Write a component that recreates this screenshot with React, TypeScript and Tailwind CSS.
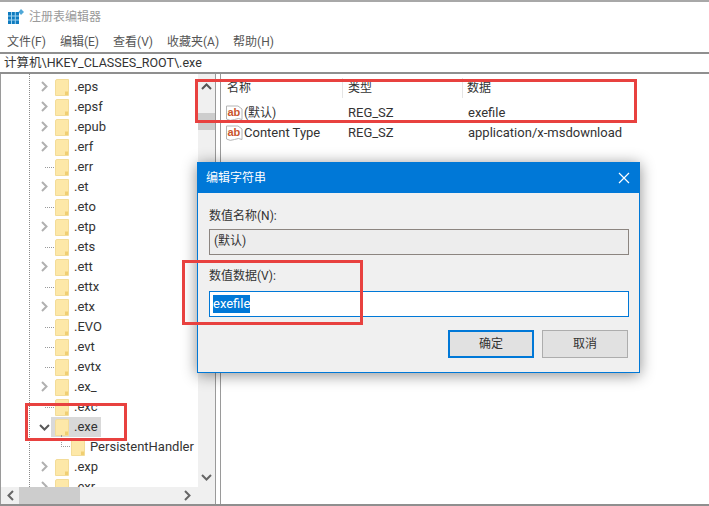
import React from 'react';

const FONT = { fontFamily: 'Roboto, "Noto Sans CJK SC", sans-serif' };

type Node = { name: string; kind: 'closed' | 'leaf' | 'open' | 'child' };

const nodes: Node[] = [
  { name: '.eps', kind: 'closed' },
  { name: '.epsf', kind: 'closed' },
  { name: '.epub', kind: 'closed' },
  { name: '.erf', kind: 'closed' },
  { name: '.err', kind: 'leaf' },
  { name: '.et', kind: 'closed' },
  { name: '.eto', kind: 'leaf' },
  { name: '.etp', kind: 'closed' },
  { name: '.ets', kind: 'leaf' },
  { name: '.ett', kind: 'closed' },
  { name: '.ettx', kind: 'leaf' },
  { name: '.etx', kind: 'closed' },
  { name: '.EVO', kind: 'leaf' },
  { name: '.evt', kind: 'leaf' },
  { name: '.evtx', kind: 'leaf' },
  { name: '.ex_', kind: 'closed' },
  { name: '.exc', kind: 'leaf' },
  { name: '.exe', kind: 'open' },
  { name: 'PersistentHandler', kind: 'child' },
  { name: '.exp', kind: 'closed' },
  { name: '.exr', kind: 'closed' },
];

const Folder = () => (
  <svg width="14" height="17" viewBox="0 0 14 17" className="shrink-0">
    <path d="M0.5 2 Q0.5 0.5 2 0.5 H13.5 V16.5 H0.5 Z" fill="#fde8a8" stroke="#f3dc98" />
    <path d="M10 16 V12.5 H13 V16 Z" fill="#f0cf72" />
  </svg>
);

const Chevron = ({ dir, color = '#a6a6a6' }: { dir: 'up' | 'down' | 'left' | 'right'; color?: string }) => {
  const d = {
    up: 'M1 7 L5.5 2.5 L10 7',
    down: 'M1 3 L5.5 7.5 L10 3',
    left: 'M7 1 L2.5 5.5 L7 10',
    right: 'M3 1 L7.5 5.5 L3 10',
  }[dir];
  return (
    <svg width="11" height="11" viewBox="0 0 11 11" className="shrink-0">
      <path d={d} fill="none" stroke={color} strokeWidth="2" />
    </svg>
  );
};

const RegIcon = () => (
  <svg width="17" height="17" viewBox="0 0 17 17" className="shrink-0">
    <path d="M0.5 1 H12 L16 4 V14.5 Q12.5 12.5 8.5 14.5 Q4 16.5 0.5 14 Z" fill="#fff" stroke="#b5b5b5" />
    <text x="1.5" y="11" fontSize="11" fontWeight="700" fill="#c9552c" fontFamily="Liberation Sans">ab</text>
  </svg>
);

const TreeRow = ({ node }: { node: Node }) => (
  <div className={`relative h-5 shrink-0 flex items-center ${node.kind === 'child' ? 'pl-[70px]' : 'pl-[54px]'}`}>
    {node.kind === 'open' && <div className="absolute left-[50px] top-0 w-[50px] h-5 bg-[#d9d9d9]" />}
    {node.kind === 'closed' && (
      <div className="absolute left-[38px] top-[4px]">
        <Chevron dir="right" color="#b0b0b0" />
      </div>
    )}
    {node.kind === 'open' && (
      <div className="absolute left-[38px] top-[5px]">
        <Chevron dir="down" color="#595959" />
      </div>
    )}
    {node.kind === 'leaf' && <div className="absolute left-[44px] top-[10px] w-[9px] border-t border-dotted border-[#9a9a9a]" />}
    {node.kind === 'child' && <div className="absolute left-[60px] top-[-2px] w-[9px] h-[12px] border-l border-b border-dotted border-[#9a9a9a]" />}
    <div className="relative flex items-center gap-[5px]">
      <Folder />
      <span className="text-[13px] leading-5 whitespace-nowrap text-[#333]">{node.name}</span>
    </div>
  </div>
);

const RedBox = ({ className }: { className: string }) => (
  <div className={`absolute border-[3px] border-[#e8413f] pointer-events-none ${className}`} />
);

const Dialog = () => (
  <div className="absolute left-[197px] top-[162px] w-[443px] h-[211px] bg-[#f0f0f0] border border-[#0078d7] shadow-[0_2px_14px_rgba(0,0,0,0.45)] flex flex-col">
    <div className="h-[30px] bg-[#0078d7] flex items-center justify-between pl-[8px] pr-[9px] text-white shrink-0">
      <span className="text-[12px]">编辑字符串</span>
      <svg width="12" height="12" viewBox="0 0 12 12">
        <path d="M1 1 L11 11 M11 1 L1 11" stroke="#fff" strokeWidth="1.2" fill="none" />
      </svg>
    </div>
    <div className="flex flex-col pl-[11px] pr-[10px] text-[#333] text-[12px]">
      <div className="mt-[13px] h-5 leading-5">数值名称(N):</div>
      <div className="mt-[3px] h-[26px] border border-[#8c8580] bg-[#ededed] px-[4px] leading-[22px]">(默认)</div>
      <div className="mt-[11px] h-5 leading-5">数值数据(V):</div>
      <div className="mt-[5px] h-[26px] border border-[#0078d7] bg-white px-[3px] flex items-center">
        <span className="bg-[#0078d7] text-white text-[13px] leading-[18px]">exefile</span>
      </div>
      <div className="mt-[13px] flex justify-end gap-[8px] pr-[1px]">
        <div className="w-[86px] h-[28px] bg-[#e1e1e1] border-2 border-[#0078d7] flex items-center justify-center">确定</div>
        <div className="w-[86px] h-[28px] bg-[#e1e1e1] border border-[#adadad] flex items-center justify-center">取消</div>
      </div>
    </div>
  </div>
);

export default function App() {
  return (
    <div className="relative w-[709px] h-[506px] bg-white overflow-hidden flex flex-col" style={FONT}>
      {/* title bar */}
      <div className="h-[32px] shrink-0 border-t-2 border-[#a8a8a8] flex items-center pl-[8px] gap-[5px]">
        <svg width="16" height="16" viewBox="0 0 16 16" className="shrink-0">
          <path d="M0 3 H11 V15 H0 Z" fill="#0f7bbf" />
          <path d="M3.5 3 V15 M7.3 3 V15 M0 7 H11 M0 11 H11" stroke="#9fd4f0" strokeWidth="1" />
          <path d="M13 0 L16 3 L13 6 L10.5 3 Z" fill="#4fa8d8" />
        </svg>
        <span className="text-[12px] text-[#9a9a9a]">注册表编辑器</span>
      </div>
      {/* menu */}
      <div className="h-[19px] shrink-0 flex items-center pl-[7px] gap-[14px] text-[12px] text-[#555]">
        <span>文件(F)</span>
        <span>编辑(E)</span>
        <span>查看(V)</span>
        <span>收藏夹(A)</span>
        <span>帮助(H)</span>
      </div>
      {/* address */}
      <div className="h-[22px] mt-[1px] pt-[1px] shrink-0 border-y-2 border-[#8f8f8f] flex items-center pl-[4px] text-[12.5px] text-[#333]">
        计算机\HKEY_CLASSES_ROOT\.exe
      </div>
      {/* body */}
      <div className="flex flex-1 min-h-0 border-b-2 border-[#8f8f8f]">
        <div className="w-[216px] shrink-0 border-l border-[#9a9a9a] border-r flex">
          <div className="relative w-[197px] flex flex-col">
            <div className="relative flex-1 min-h-0 overflow-hidden">
              <div className="absolute left-[28px] top-0 bottom-0 border-l border-dotted border-[#8a8a8a]" />
              <div className="flex flex-col pt-[3px]">
                {nodes.map((n) => (
                  <TreeRow key={n.name} node={n} />
                ))}
              </div>
            </div>
            <div className="h-[17px] shrink-0 bg-[#f0f0f0] flex items-center justify-between px-[5px] relative">
              <Chevron dir="left" color="#666" />
              <div className="absolute left-[18px] top-0 w-[61px] h-[17px] bg-[#cdcdcd]" />
              <Chevron dir="right" color="#666" />
            </div>
          </div>
          <div className="relative w-[17px] bg-[#f0f0f0] flex flex-col items-center justify-between pt-[8px] pb-[21px]">
            <Chevron dir="up" color="#555" />
            <div className="absolute left-0 top-[39px] w-[17px] h-[17px] bg-[#cdcdcd]" />
            <Chevron dir="down" color="#666" />
          </div>
        </div>
        <div className="w-[4px] shrink-0" />
        <div className="flex-1 min-w-0 border-l border-[#9a9a9a] text-[13px] text-[#333]">
          <div className="flex h-5 mt-[4px] items-center text-[12px]">
            <div className="w-[122px] pl-[6px] border-r border-[#e5e5e5] h-[20px] leading-5">名称</div>
            <div className="w-[120px] pl-[5px] border-r border-[#e5e5e5] h-[20px] leading-5">类型</div>
            <div className="pl-[4px] leading-5">数据</div>
          </div>
          <div className="flex h-5 mt-[5px] items-center">
            <div className="w-[122px] pl-[5px] flex items-center gap-[1px]"><RegIcon /><span className="text-[12px]">(默认)</span></div>
            <div className="w-[120px] pl-[5px]">REG_SZ</div>
            <div className="pl-[5px]">exefile</div>
          </div>
          <div className="flex h-5 items-center">
            <div className="w-[122px] pl-[5px] flex items-center gap-[1px]"><RegIcon /><span>Content Type</span></div>
            <div className="w-[120px] pl-[5px]">REG_SZ</div>
            <div className="pl-[5px]">application/x-msdownload</div>
          </div>
        </div>
      </div>
      <Dialog />
      <RedBox className="left-[195px] top-[79px] w-[442px] h-[44px]" />
      <RedBox className="left-[182px] top-[260px] w-[181px] h-[65px]" />
      <RedBox className="left-[25px] top-[403px] w-[102px] h-[38px]" />
    </div>
  );
}
